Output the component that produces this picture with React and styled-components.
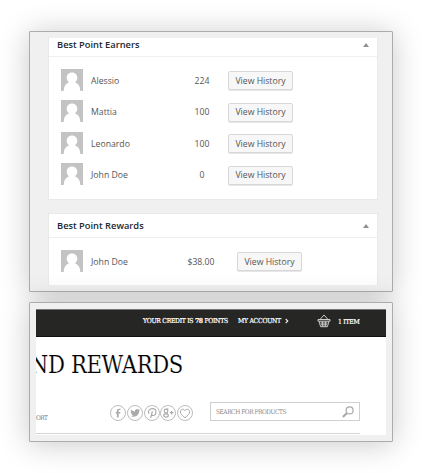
import React from "react";
import styled, { createGlobalStyle } from "styled-components";

const GlobalStyle = createGlobalStyle`
  * { box-sizing: border-box; }
  html, body { margin: 0; background: #fff; }
  body { width: 422px; height: 473px; overflow: hidden; }
`;

const Page = styled.main`
  display: flex;
  flex-direction: column;
  gap: 10px;
  padding: 31px 29px;
  width: 422px;
  height: 473px;
  font-family: "Open Sans", sans-serif;
`;

const Frame = styled.section`
  width: 364px;
  height: ${(p) => p.$height}px;
  flex: none;
  padding: 6px;
  border: 1px solid #acacac;
  border-radius: 1px;
  background: #f0f0f0;
  box-shadow: 0 2px 30px rgba(0, 0, 0, 0.22);
`;

const Admin = styled.div`
  display: flex;
  flex-direction: column;
  gap: 13px;
  height: 247px;
  padding: 0 8px 0 12px;
  overflow: hidden;
`;

const Panel = styled.article`
  width: 330px;
  height: ${(p) => p.$height}px;
  flex: none;
  border: 1px solid #e9e9e9;
  border-top-width: ${(p) => (p.$clipped ? 0 : 1)}px;
  border-bottom-width: ${(p) => (p.$clipped ? 1 : 0)}px;
  background: #fff;
`;

const PanelHeader = styled.header`
  display: flex;
  align-items: center;
  justify-content: space-between;
  height: ${(p) => p.$height}px;
  padding: 0 8px 0 8px;
  border-bottom: 1px solid #efefef;
`;

const PanelTitle = styled.h2`
  margin: 0;
  color: #23282d;
  font-size: 9.3px;
  font-weight: 600;
  line-height: 12px;
  white-space: nowrap;
  transform: translateY(${(p) => p.$nudge || 0}px);
`;

const Collapse = styled.i`
  border: 3px solid transparent;
  border-top: 0;
  border-bottom: 4px solid #909090;
  transform: translateY(${(p) => p.$nudge || 0}px);
`;

const Rows = styled.div`
  padding-top: 8px;
`;

const Row = styled.div`
  display: grid;
  grid-template-columns: 30px ${(p) => (p.$wide ? "95px 51px" : "96px 41px")} auto;
  justify-content: start;
  align-items: center;
  height: 31.5px;
  padding-left: 12px;
  color: #555;
  font-size: 8.7px;
  line-height: 12px;
`;

const Avatar = styled.svg`
  display: block;
  width: 22px;
  height: 22px;
  transform: translateY(-1px);
`;

const Value = styled.span`
  justify-self: start;
  width: 30px;
  text-align: center;
`;

const HistoryButton = styled.button`
  width: 65px;
  height: 19px;
  padding: 0;
  border: 1px solid #d8d8d8;
  border-radius: 2px;
  background: #f7f7f7;
  box-shadow: 0 1px 0 #e6e6e6;
  color: #555;
  font: 8.7px/12px "Open Sans", sans-serif;
  white-space: nowrap;
`;

const Shop = styled.div`
  height: 126px;
  background: #fff;
  overflow: hidden;
  font-family: "DejaVu Serif Condensed", "DejaVu Serif", serif;
`;

const TopBar = styled.nav`
  display: flex;
  align-items: center;
  height: 28px;
  padding: 0 20px 4px 107px;
  border-top: 1px solid #777;
  border-bottom: 1px solid #111;
  background: #262624;
  color: #fff;
  font-size: 6.8px;
  line-height: 10px;
  white-space: nowrap;
  -webkit-text-stroke: 0.2px #fff;
`;

const Credit = styled.span`
  width: 95px;
  letter-spacing: -0.3px;
`;

const Account = styled.a`
  display: flex;
  align-items: center;
  gap: 4px;
  width: 79px;
  letter-spacing: -0.27px;
`;

const Basket = styled.svg`
  width: 14px;
  height: 14px;
  margin-right: 7px;
`;

const Items = styled.span`
  letter-spacing: -0.25px;
  transform: translateY(1px);
`;

const ShopTitle = styled.h1`
  display: flex;
  justify-content: flex-end;
  width: 147px;
  height: 56px;
  margin: 0;
  color: #000;
  font-size: 23.5px;
  font-weight: 400;
  line-height: 56px;
  letter-spacing: -0.35px;
  white-space: nowrap;
  -webkit-text-stroke: 0.15px #fff;
`;

const Tools = styled.div`
  display: flex;
  align-items: center;
  width: 324px;
  height: 41px;
  padding-bottom: 3px;
  border-bottom: 1px solid #d5d5d5;
`;

const Support = styled.span`
  width: 12px;
  height: 10px;
  margin-right: 62px;
  color: #777;
  font-size: 6.5px;
  line-height: 10px;
  letter-spacing: -0.6px;
  transform: translateY(6px);
`;

const Social = styled.div`
  display: flex;
  gap: 0.75px;
  width: 100px;
`;

const SocialIcon = styled.svg`
  width: 16px;
  height: 16px;
  flex: none;
  transform: translateY(1px);
`;

const Search = styled.div`
  display: flex;
  align-items: center;
  justify-content: space-between;
  width: 150px;
  height: 19px;
  padding: 0 5px;
  border: 1px solid #cfcfcf;
  color: #888;
  font-size: 6.5px;
  line-height: 10px;
  letter-spacing: -0.45px;
  white-space: nowrap;
`;

const SearchGlyph = styled.svg`
  width: 12px;
  height: 12px;
`;

function Person() {
  return (
    <Avatar viewBox="0 0 22 22">
      <path fill="#c3c3c3" d="M0 0h22v22H0z" />
      <path
        fill="#fff"
        d="M11 3.5c3.3 0 5.3 2.3 5.3 5.2 0 2.2-1.1 3.5-2.4 4.6 3.4 1.2 5.3 4.2 5.4 8.7H2.7c.1-4.5 2-7.5 5.4-8.7-1.3-1.1-2.4-2.4-2.4-4.6 0-2.9 2-5.2 5.3-5.2z"
      />
    </Avatar>
  );
}

function PersonRow({ name, value, wide }) {
  return (
    <Row $wide={wide}>
      <Person />
      <span>{name}</span>
      <Value>{value}</Value>
      <HistoryButton>View History</HistoryButton>
    </Row>
  );
}

const SOCIAL = [
  <path fill="#aaa" d="M8.6 12.6V8.5h1.6l.2-1.4H8.6v-1c0-.7.3-1 1-1h.9V3.8c-2.4-.4-3.6.4-3.6 2.2v1.1H5.7v1.4h1.2v4.1z" />,
  <path fill="#aaa" d="M13 5.1c-.4.3-.6.5-.8.6.1 4.3-4.2 7.5-8.6 5.2 1.1.1 2-.2 2.6-.7-.9-.1-1.5-.6-1.8-1.4h.8c-1-.4-1.5-1.1-1.5-2l.8.2c-.8-.8-.9-1.7-.4-2.6 1.1 1.2 2.3 1.9 3.9 2-.3-2.1 2-3.1 3.4-1.8l1.3-.5-.8 1.2z" />,
  <path fill="none" stroke="#aaa" strokeWidth="1.2" d="M5 8.8C3.5 6.2 5.3 3.7 8.4 3.7c2.2 0 3.5 1.2 3.5 3 0 2.4-1.3 3.8-2.8 3.8-.8 0-1.4-.4-1.5-.9M8.4 6.2 6.6 13" />,
  <g fill="none" stroke="#aaa" strokeWidth="1.2">
    <circle cx="6" cy="6" r="1.8" />
    <path d="M6.2 4.2h2.2M6.6 7.7l1 1M9.8 7.7h3.6M11.6 5.9v3.6" />
    <ellipse cx="6" cy="10.5" rx="2.3" ry="1.6" />
  </g>,
  <path fill="none" stroke="#aaa" strokeWidth="1" d="M8 12.8C5.2 10.4 3.4 9 3.4 6.9 3.4 4.1 6.7 3.3 8 5.6c1.3-2.3 4.6-1.5 4.6 1.3 0 2.1-1.8 3.5-4.6 5.9z" />,
];

export default function App() {
  return (
    <>
      <GlobalStyle />
      <Page>
        <Frame $height={261}>
          <Admin>
            <Panel $height={162} $clipped>
              <PanelHeader $height={19}>
                <PanelTitle $nudge={-2}>Best Point Earners</PanelTitle>
                <Collapse $nudge={-2} />
              </PanelHeader>
              <Rows>
                <PersonRow name="Alessio" value="224" />
                <PersonRow name="Mattia" value="100" />
                <PersonRow name="Leonardo" value="100" />
                <PersonRow name="John Doe" value="0" />
              </Rows>
            </Panel>
            <Panel $height={90}>
              <PanelHeader $height={24}>
                <PanelTitle>Best Point Rewards</PanelTitle>
                <Collapse />
              </PanelHeader>
              <Rows>
                <PersonRow name="John Doe" value="$38.00" wide />
              </Rows>
            </Panel>
          </Admin>
        </Frame>
        <Frame $height={140}>
          <Shop>
            <TopBar>
              <Credit>
                YOUR CREDIT IS <b>78</b> POINTS
              </Credit>
              <Account>
                MY ACCOUNT
                <svg width="4" height="6" viewBox="0 0 4 6">
                  <path d="M.7 1 2.8 3 .7 5" fill="none" stroke="#eee" strokeWidth="1.1" />
                </svg>
              </Account>
              <Basket viewBox="0 0 14 14" fill="none" stroke="#ccc" strokeWidth="1">
                <path d="M1 5.5h12v1.7H1zM2 7.2l1.6 5.5h6.8L12 7.2M3 5.5 7 1l4 4.5M3.5 9h7M4 10.8h6M5.3 7.5l.5 5M8.7 7.5l-.5 5" />
              </Basket>
              <Items>1 ITEM</Items>
            </TopBar>
            <ShopTitle>ND REWARDS</ShopTitle>
            <Tools>
              <Support>ORT</Support>
              <Social>
                {SOCIAL.map((shape, i) => (
                  <SocialIcon key={i} viewBox="0 0 16 16">
                    <circle cx="8" cy="8" r="7.5" fill="none" stroke="#bcbcbc" />
                    {shape}
                  </SocialIcon>
                ))}
              </Social>
              <Search>
                <span>SEARCH FOR PRODUCTS</span>
                <SearchGlyph viewBox="0 0 12 12" fill="none" stroke="#aaa">
                  <circle cx="7.6" cy="4.4" r="3.5" strokeWidth="1.2" />
                  <path d="M5 7 .9 11.1" strokeWidth="2.1" />
                </SearchGlyph>
              </Search>
            </Tools>
          </Shop>
        </Frame>
      </Page>
    </>
  );
}
